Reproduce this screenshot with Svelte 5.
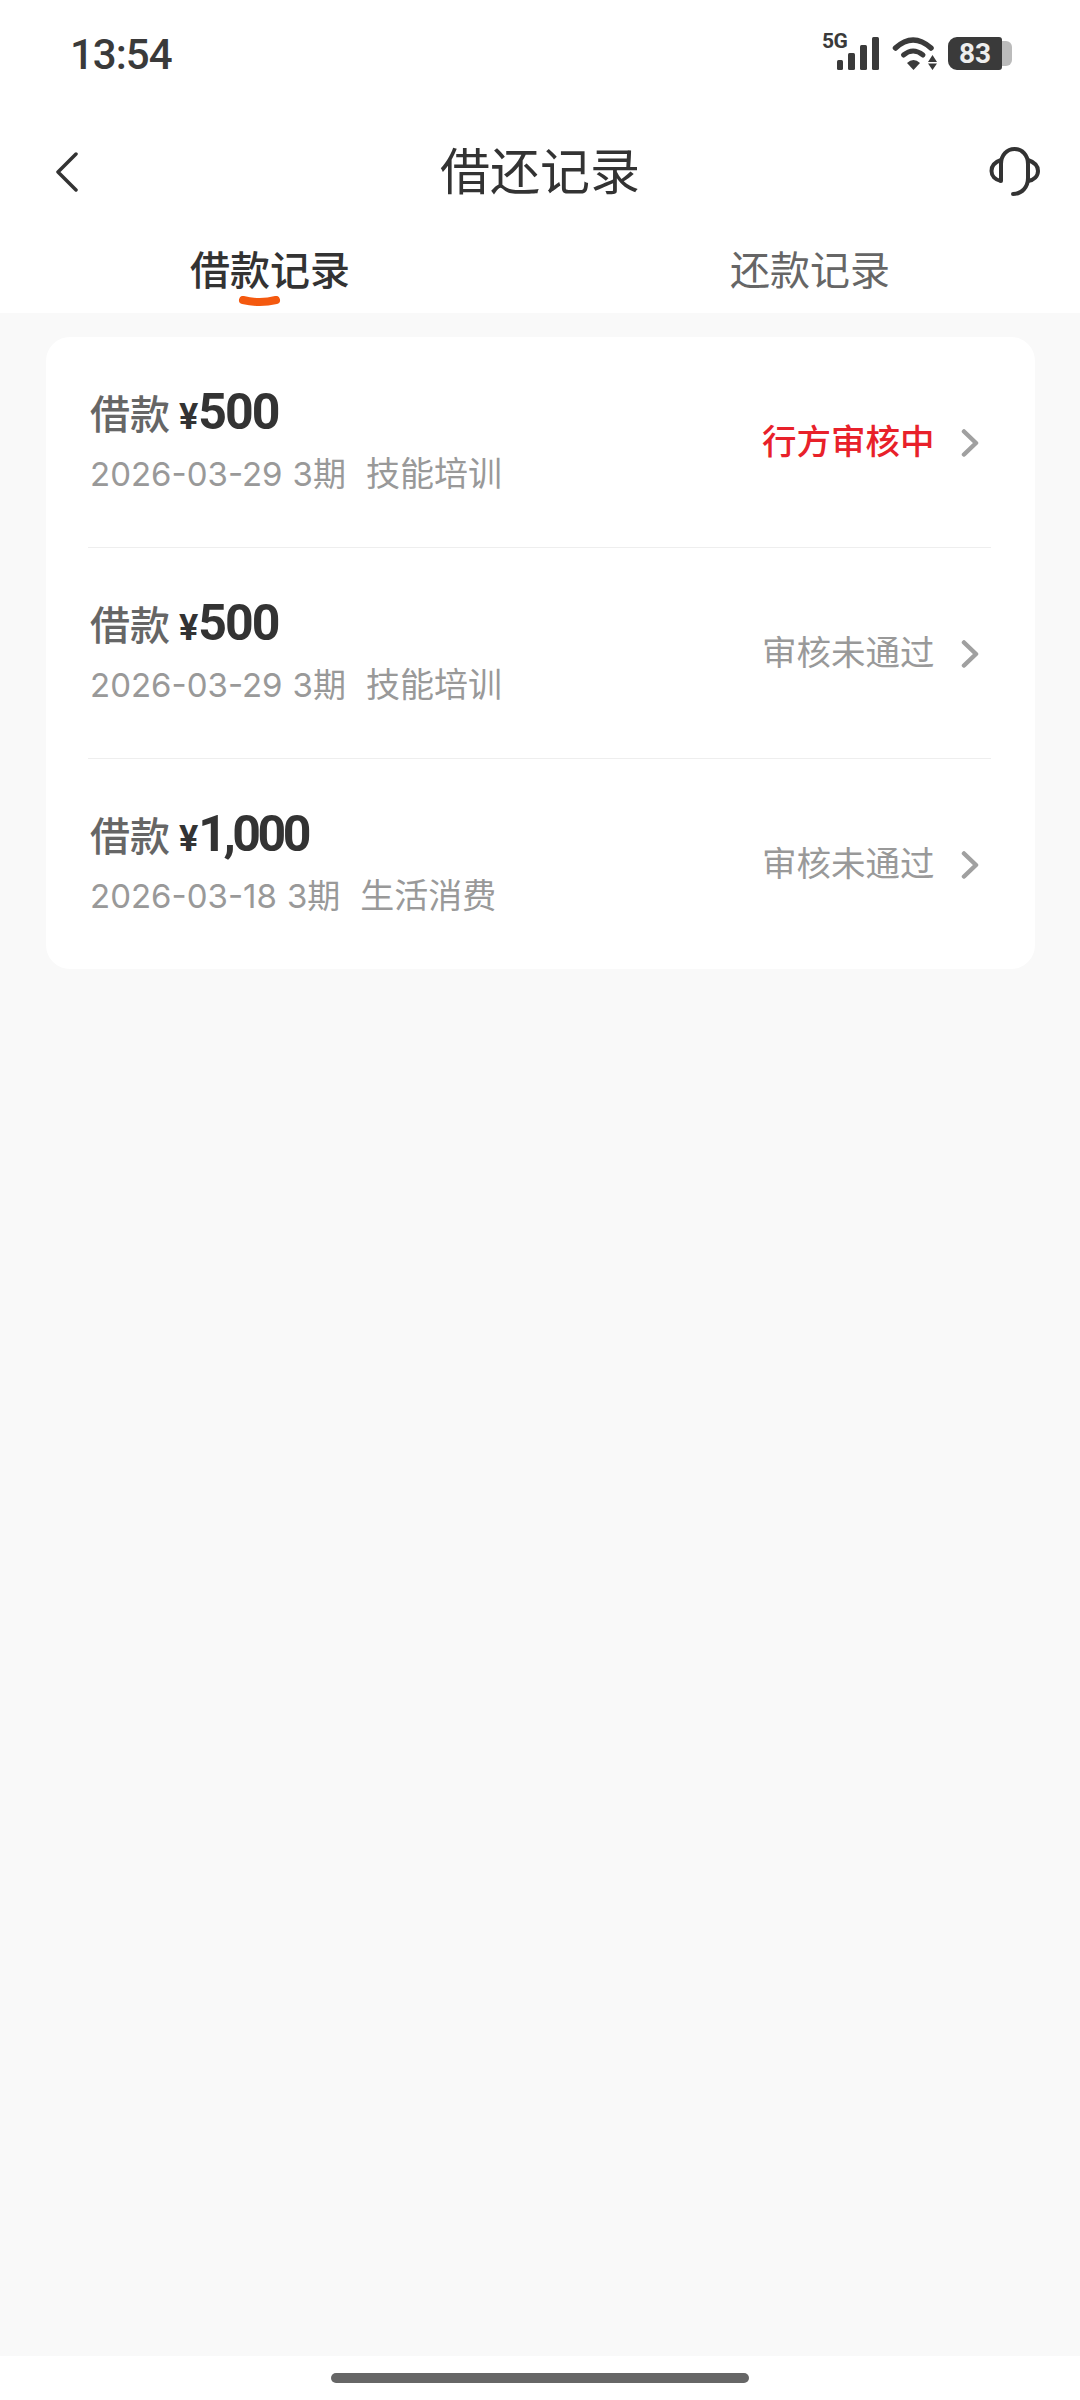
<script>
  const rows = [
    { amount: '500', date: '2026-03-29', term: '3期', use: '技能培训', status: '行方审核中', active: true },
    { amount: '500', date: '2026-03-29', term: '3期', use: '技能培训', status: '审核未通过', active: false },
    { amount: '1,000', date: '2026-03-18', term: '3期', use: '生活消费', status: '审核未通过', active: false }
  ];
</script>

<div class="page">
  <header class="head">
    <div class="status">
      <span class="time">13:54</span>
      <div class="sys">
        <svg width="57" height="36" viewBox="0 0 57 36" class="sig">
          <text x="0" y="14" class="g5">5G</text>
          <rect x="15" y="26" width="6" height="10" rx="1.5" fill="#3a3a3a" />
          <rect x="26" y="19" width="7" height="17" rx="1.5" fill="#3a3a3a" />
          <rect x="38" y="11" width="7" height="25" rx="1.5" fill="#3a3a3a" />
          <rect x="50" y="3" width="7" height="33" rx="1.500" fill="#3a3a3a" />
        </svg>
        <svg width="45" height="36" viewBox="0 0 45 36">
          <path d="M3.500 14Q21 -2 39 14" fill="none" stroke="#3a3a3a" stroke-width="5.500" stroke-linecap="round" />
          <path d="M11.500 21Q21 13 31 21" fill="none" stroke="#3a3a3a" stroke-width="5" stroke-linecap="round" />
          <path d="M15 29Q21.500 23 28 29L21.500 36Z" fill="#3a3a3a" />
          <path d="M36 28L40.500 21L45 28ZM36 29.500L40.500 36L45 29.500Z" fill="#3a3a3a" />
        </svg>
        <div class="batt"><span class="lvl">83</span><span class="tip"></span></div>
      </div>
    </div>
    <div class="nav">
      <svg class="back" width="24" height="40" viewBox="0 0 24 40">
        <path d="M21 2L3 20L21 38" fill="none" stroke="#333" stroke-width="3.500" stroke-linecap="round" stroke-linejoin="round" />
      </svg>
      <h1>借还记录</h1>
      <svg class="cs" width="52" height="52" viewBox="0 0 52 52">
        <path d="M12 36V19C12 10 18 4 25.500 4C33 4 39 10 39 19V33C39 42 33 49 24 49" fill="none" stroke="#333" stroke-width="4" stroke-linecap="round" />
        <path d="M12 15C6 17 2.500 21 2.500 26C2.500 31 6 35 12 36" fill="none" stroke="#333" stroke-width="4" />
        <path d="M39 15C45 17 49 21 49 26C49 31 45 35 39 36" fill="none" stroke="#333" stroke-width="4" />
      </svg>
    </div>
    <div class="tabs">
      <div class="tab on">
        借款记录
        <svg class="ink" width="50" height="14" viewBox="0 0 50 14">
          <path d="M5 4Q22 8 38 4" fill="none" stroke="#f4590f" stroke-width="8" stroke-linecap="round" />
        </svg>
      </div>
      <div class="tab">还款记录</div>
    </div>
  </header>

  <main class="main">
    <section class="card">
      {#each rows as r}
        <div class="row">
          <div class="info">
            <div class="top"><span class="lab">借款</span><span class="yen">¥</span><span class="amt" class:long={r.amount.length > 3}>{r.amount}</span></div>
            <div class="sub"><span class="num">{r.date}</span><span class="num">{r.term}</span><span class="use">{r.use}</span></div>
          </div>
          <span class="st" class:red={r.active}>{r.status}</span>
          <svg class="chev" width="18" height="28" viewBox="0 0 18 28">
            <path d="M3 2.500L15 14L3 25.500" fill="none" stroke="#a0a0a0" stroke-width="4.500" stroke-linecap="round" stroke-linejoin="round" />
          </svg>
        </div>
      {/each}
    </section>
  </main>

  <footer class="foot"><span class="pill"></span></footer>
</div>

<style>
  :global(body) { margin: 0; background: #f9f9f9; }
  .page {
    width: 1080px; height: 2400px; display: flex; flex-direction: column; background: #f9f9f9;
    font-family: Roboto, "Noto Sans CJK SC", sans-serif; color: #333;
  }
  .head { background: #fff; height: 313px; flex: none; }
  .status { height: 108px; display: flex; align-items: center; justify-content: space-between; padding: 0 68px 0 70px; box-sizing: border-box; }
  .time { font-size: 42px; font-weight: 500; color: #3a3a3a; letter-spacing: -1px; }
  .sys { display: flex; align-items: center; margin-top: -4px; }
  .sig { overflow: visible; margin-right: 13px; }
  .g5 { font: 700 21px Roboto, sans-serif; fill: #3a3a3a; letter-spacing: -0.5px; }
  .batt { display: flex; align-items: center; margin-left: 11px; margin-top: 3px; }
  .lvl { width: 54px; height: 33px; background: #3a3a3a; border-radius: 9px 3px 3px 9px; color: #eee; font: 700 28px/33px Roboto, sans-serif; text-align: center; }
  .tip { width: 10px; height: 25px; background: #bbb; border-radius: 0 6px 6px 0; }
  .nav { height: 100px; display: flex; align-items: center; justify-content: center; position: relative; margin-top: 12px; }
  .nav h1 { margin: 0; font-size: 50px; font-weight: 400; color: #333; line-height: 60px; padding-top: 6px; }
  .back { position: absolute; left: 55px; top: 32px; }
  .cs { position: absolute; left: 989px; top: 25px; }
  .tabs { display: flex; margin-top: 24px; }
  .tab { width: 540px; box-sizing: border-box; font-size: 40px; line-height: 56px; text-align: center; color: #666; position: relative; }
  .tab.on { color: #333; font-weight: 500; }
  .ink { position: absolute; left: 238px; top: 52px; }
  .main { flex: 1; padding: 24px 45px 0 46px; box-sizing: border-box; }
  .card { background: #fff; border-radius: 24px; padding: 0 44px 0 42px; }
  .row { height: 211px; box-sizing: border-box; display: flex; align-items: center; border-bottom: 1px solid #eee; }
  .row:last-child { border-bottom: 0; height: 210px; }
  .info { flex: 1; display: flex; flex-direction: column; margin-left: 2px; margin-bottom: 4px; }
  .top { display: flex; align-items: baseline; height: 60px; line-height: 60px; }
  .lab { font-size: 40px; color: #666; font-weight: 500; }
  .yen { font-size: 36px; font-weight: 700; margin-left: 9px; }
  .amt { font-size: 50px; font-weight: 700; letter-spacing: -2px; }
  .amt.long { letter-spacing: -3.500px; }
  .sub { font-size: 34px; line-height: 48px; color: #999; display: flex; gap: 10px; margin-top: 8.500px; }
  .num { font-family: Inter, "Noto Sans CJK SC", sans-serif; font-size: 33px; }
  .use { margin-left: 10px; }
  .st { font-size: 34.500px; color: #999; margin-right: 26.500px; margin-bottom: 6px; }
  .st.red { color: #e8212a; font-weight: 500; }
  .chev { flex: none; margin-right: 12px; margin-top: 2px; }
  .foot { height: 44px; background: #fff; display: flex; justify-content: center; padding-top: 17px; box-sizing: border-box; flex: none; }
  .pill { width: 418px; height: 10px; border-radius: 5px; background: #666; }
</style>
